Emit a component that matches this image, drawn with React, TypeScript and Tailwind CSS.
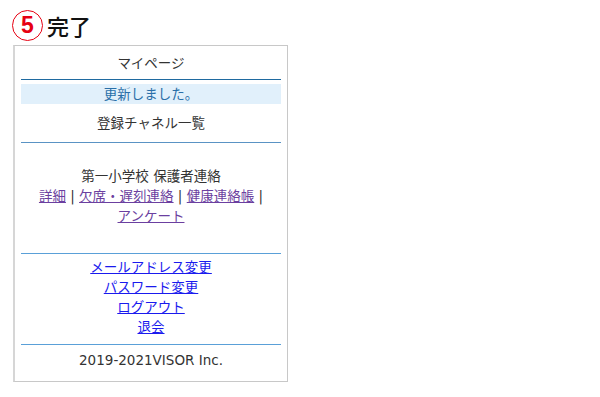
const font = { fontFamily: '"DejaVu Sans", "Noto Sans CJK JP", sans-serif' }

const App = () => {
    return (
        <div className="w-[600px] h-[397px] bg-white text-[#333] text-[13.5px]" style={font}>
            <div className="pl-[12px] pt-[10px] h-[45px] flex items-start gap-[4px]">
                <span className="w-[31px] h-[31px] rounded-full border-[1.5px] border-[#e60012] text-[#e60012] flex items-center justify-center text-[23px] font-bold leading-none" style={{ fontFamily: '"Liberation Sans", sans-serif' }}>5</span>
                <span className="text-[22px] leading-[31px] text-[#111] font-medium" style={{ fontFamily: '"Noto Sans CJK JP", sans-serif' }}>完了</span>
            </div>
            <div className="ml-[13px] w-[275px] h-[337px] border border-[#c8c8c8] border-l-[2px] border-l-[#d6d6d6] px-[6px] flex flex-col items-stretch text-center">
                <div className="h-[33px] leading-[33px] pt-[1px]">マイページ</div>
                <div className="h-[1px] bg-[#1f6aa0]"></div>
                <div className="mt-[4px] h-[20px] leading-[20px] bg-[#e1f0fb] text-[#2a6fa8]">更新しました。</div>
                <div className="h-[38px] leading-[38px]">登録チャネル一覧</div>
                <div className="h-[1px] bg-[#5a93c4]"></div>
                <div className="pt-[23px] leading-[20px]">
                    <div>第一小学校 保護者連絡</div>
                    <div>
                        <a href="#" className="text-[#6b3fa0] underline">詳細</a> | <a href="#" className="text-[#6b3fa0] underline">欠席・遅刻連絡</a> | <a href="#" className="text-[#6b3fa0] underline">健康連絡帳</a> |
                    </div>
                    <div><a href="#" className="text-[#6b3fa0] underline">アンケート</a></div>
                </div>
                <div className="mt-[27px] h-[1px] bg-[#5aa0d8]"></div>
                <div className="pt-[3px] leading-[20px] flex flex-col items-center">
                    <a href="#" className="text-[#1a1aee] underline">メールアドレス変更</a>
                    <a href="#" className="text-[#1a1aee] underline">パスワード変更</a>
                    <a href="#" className="text-[#1a1aee] underline">ログアウト</a>
                    <a href="#" className="text-[#1a1aee] underline">退会</a>
                </div>
                <div className="mt-[7px] h-[1px] bg-[#5aa0d8]"></div>
                <div className="h-[30px] leading-[30px]">2019-2021VISOR Inc.</div>
            </div>
        </div>
    )
}

export default App
